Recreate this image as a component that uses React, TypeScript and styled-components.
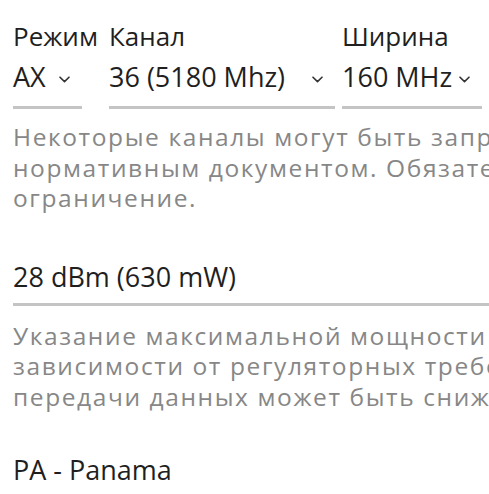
import React from "react";
import styled, { createGlobalStyle } from "styled-components";

const GlobalStyle = createGlobalStyle`
  html, body {
    margin: 0;
    padding: 0;
    background: #ffffff;
    overflow: hidden;
  }
  body {
    font-family: "Open Sans", "Noto Sans", "Liberation Sans", sans-serif;
    color: #1f1f1f;
  }
`;

const Page = styled.div`
  width: 900px;
  padding: 19px 0 0 13px;
  box-sizing: border-box;
`;

const SelectRow = styled.div`
  display: flex;
  align-items: flex-start;
`;

const Field = styled.div<{ $width: number; $gap: number }>`
  width: ${(p) => p.$width}px;
  margin-left: ${(p) => p.$gap}px;
  flex: none;
  display: flex;
  flex-direction: column;
  gap: 6px;
`;

const Label = styled.div`
  font-size: 26px;
  line-height: 34px;
  white-space: nowrap;
  color: #1f1f1f;
`;

const Select = styled.div`
  display: flex;
  align-items: center;
  justify-content: space-between;
  padding: 0 12px 11px 0;
  border-bottom: 3px solid #c4c4c4;
  font-size: 27px;
  line-height: 36px;
  white-space: nowrap;
`;

const Chevron = styled.svg`
  width: 11px;
  height: 7px;
  flex: none;
  margin-top: 4px;
`;

const Help = styled.p<{ $top: number }>`
  margin: ${(p) => p.$top}px 0 0;
  font-size: 24.5px;
  line-height: 30.5px;
  letter-spacing: 1.6px;
  color: #878787;
  white-space: nowrap;
`;

const Value = styled.div<{ $top: number; $line: boolean }>`
  margin-top: ${(p) => p.$top}px;
  font-size: 27px;
  line-height: 36px;
  padding-bottom: 8px;
  border-bottom: ${(p) => (p.$line ? "3px solid #c4c4c4" : "none")};
  white-space: nowrap;
`;

const ChevronIcon = () => (
  <Chevron viewBox="0 0 11 7" fill="none">
    <path d="M1 1.2 L5.5 5.6 L10 1.2" stroke="#333" strokeWidth="1.6" strokeLinecap="round" strokeLinejoin="round" />
  </Chevron>
);

const fields = [
  { label: "Режим", value: "AX", width: 69, gap: 0 },
  { label: "Канал", value: "36 (5180 Mhz)", width: 226, gap: 27 },
  { label: "Ширина", value: "160 MHz", width: 140, gap: 7 },
];

export default function App() {
  return (
    <>
      <GlobalStyle />
      <Page>
        <SelectRow>
          {fields.map((f) => (
            <Field key={f.label} $width={f.width} $gap={f.gap}>
              <Label>{f.label}</Label>
              <Select>
                <span>{f.value}</span>
                <ChevronIcon />
              </Select>
            </Field>
          ))}
        </SelectRow>
        <Help $top={13}>
          Некоторые каналы могут быть запрещены к использованию
          <br />
          нормативным документом. Обязательно учитывайте это
          <br />
          ограничение.
        </Help>
        <Value $top={45} $line>
          28 dBm (630 mW)
        </Value>
        <Help $top={15}>
          Указание максимальной мощности передатчика может зависеть от
          <br />
          зависимости от регуляторных требований, а скорость
          <br />
          передачи данных может быть снижена.
        </Help>
        <Value $top={40} $line={false}>
          PA - Panama
        </Value>
      </Page>
    </>
  );
}
